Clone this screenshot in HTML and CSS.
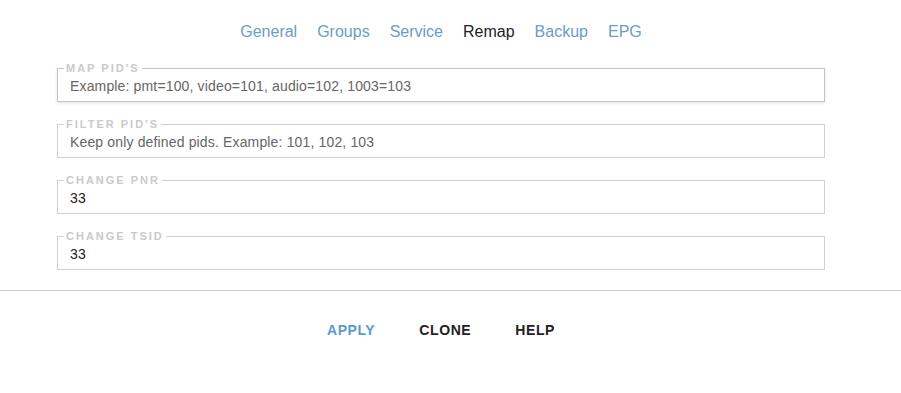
FILE: index.html
```html
<!DOCTYPE html>
<html lang="en">
<head>
    <meta charset="UTF-8">
    <meta name="viewport" content="width=device-width, initial-scale=1.0">
    <title>Remap</title>
    <link rel="stylesheet" href="styles.css">
</head>
<body>
    <!-- Tabs -->
    <nav class="tabs">
        <a href="#">General</a>
        <a href="#">Groups</a>
        <a href="#">Service</a>
        <a href="#" class="active">Remap</a>
        <a href="#">Backup</a>
        <a href="#">EPG</a>
    </nav>

    <!-- Remap form -->
    <form class="remap">
        <fieldset class="field focused">
            <legend>Map PID's</legend>
            <input type="text" placeholder="Example: pmt=100, video=101, audio=102, 1003=103" autofocus>
        </fieldset>
        <fieldset class="field">
            <legend>Filter PID's</legend>
            <input type="text" placeholder="Keep only defined pids. Example: 101, 102, 103">
        </fieldset>
        <fieldset class="field">
            <legend>Change PNR</legend>
            <input type="text" value="33">
        </fieldset>
        <fieldset class="field">
            <legend>Change TSID</legend>
            <input type="text" value="33">
        </fieldset>
    </form>

    <!-- Actions -->
    <footer class="actions">
        <button type="button" class="primary">Apply</button>
        <button type="button">Clone</button>
        <button type="button">Help</button>
    </footer>
</body>
</html>
```

FILE: styles.css
```css
body {
    font-family: "Liberation Sans", Arial, sans-serif;
    background-color: #fff;
    color: #222;
    margin: 0;
    padding: 0;
}

.tabs {
    display: flex;
    justify-content: center;
    gap: 20px;
    padding: 22px 19px 0 0;
    height: 20px;
    line-height: 20px;
    font-size: 16px;
}

.tabs a {
    color: #6a9ec2;
    text-decoration: none;
}

.tabs a.active {
    color: #222;
}

.remap {
    margin: 20px 76px 0 57px;
}

.field {
    margin: 0 0 16px;
    padding: 2px 12px 5px;
    border: 1px solid #d0d0d0;
}

.field.focused {
    border-color: #c4c4c4;
    box-shadow: 0 1px 3px rgba(0, 0, 0, 0.12);
}

.field legend {
    margin-left: -6px;
    padding: 0 2px;
    font-size: 11px;
    line-height: 12px;
    font-weight: bold;
    letter-spacing: 2px;
    text-transform: uppercase;
    color: #cacaca;
}

.field input {
    display: block;
    width: 100%;
    height: 20px;
    padding: 0;
    border: none;
    outline: none;
    font-family: inherit;
    font-size: 14px;
    letter-spacing: 0.15px;
    color: #222;
    caret-color: #222;
}

.field input::placeholder {
    color: #666;
}

.actions {
    margin-top: 20px;
    border-top: 1px solid #cfcfcf;
    padding: 29px 19px 0 0;
    display: flex;
    justify-content: center;
    gap: 44px;
}

.actions button {
    padding: 0;
    border: none;
    background: none;
    font-family: inherit;
    font-size: 14px;
    font-weight: bold;
    letter-spacing: 0.6px;
    line-height: 20px;
    text-transform: uppercase;
    color: #222;
    cursor: pointer;
}

.actions button.primary {
    color: #5a9bcf;
}
```
